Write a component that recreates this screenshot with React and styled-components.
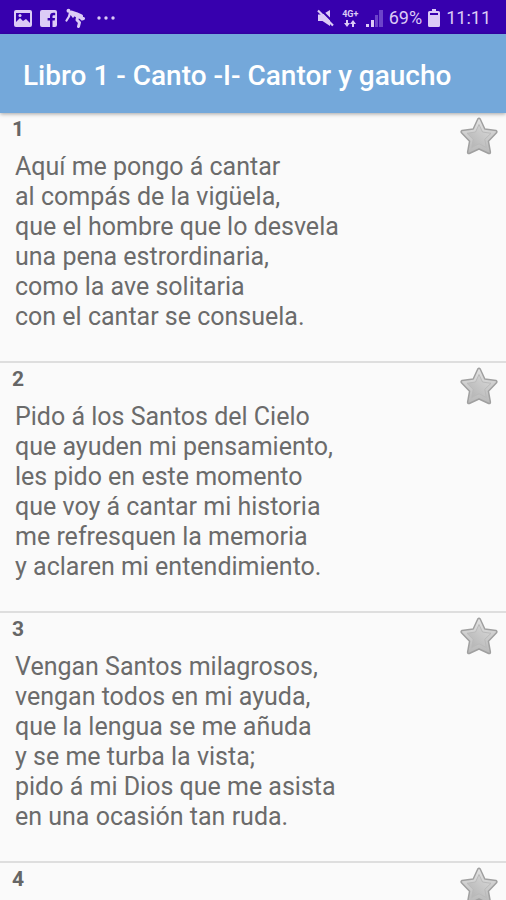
import { useState } from 'react';
import styled, { createGlobalStyle } from 'styled-components';

const GlobalStyle = createGlobalStyle`
  * {
    box-sizing: border-box;
  }

  body {
    background: #fafafa;
    font-family: Roboto, sans-serif;
    margin: 0;
  }
`;

const Screen = styled.div`
  display: flex;
  flex-direction: column;
  height: 100vh;
  overflow: hidden;
`;

const StatusBar = styled.div`
  align-items: center;
  background: #3700ae;
  color: #dccbf6;
  display: flex;
  flex: none;
  font-size: 18px;
  height: 34px;
  justify-content: space-between;
  line-height: 20px;
  padding: 2px 15px 0 14px;
`;

const StatusGroup = styled.div`
  align-items: center;
  display: flex;
  gap: ${(props) => props.$gap}px;

  svg {
    display: block;
  }
`;

const AppBar = styled.header`
  align-items: center;
  background: #74a8da;
  box-shadow: 0 1px 4px rgba(0, 0, 0, 0.35);
  display: flex;
  flex: none;
  height: 79px;
  padding: 5px 24px 0 23px;
  z-index: 1;
`;

const Title = styled.h1`
  color: #fff;
  font-size: 28px;
  font-weight: 500;
  line-height: 32px;
  margin: 0;
  white-space: nowrap;
`;

const VerseList = styled.ol`
  flex: 1;
  list-style: none;
  margin: 0;
  min-height: 0;
  overflow-y: auto;
  padding: 0;
  scrollbar-width: none;
`;

const Verse = styled.li`
  align-items: flex-start;
  border-bottom: 2px solid #dedede;
  display: flex;
  justify-content: space-between;
  min-height: 250px;
  padding: 4px 8px 0 12px;
`;

const VerseNumber = styled.h2`
  color: #666;
  font-size: 21px;
  font-weight: 700;
  line-height: 24px;
  margin: 0;
`;

const VerseText = styled.p`
  color: #6b6b6b;
  font-size: 25px;
  line-height: 30px;
  margin: 11px 0 0;
  padding-left: 3px;
  white-space: pre-line;
`;

const StarButton = styled.button`
  background: none;
  border: 0;
  cursor: pointer;
  flex: none;
  padding: 0;

  svg {
    display: block;
  }
`;

const NetworkType = styled.div`
  align-items: center;
  display: flex;
  flex-direction: column;
  font-size: 9px;
  font-weight: 700;
  line-height: 11px;
  width: 19px;
`;

const verses = [
  {
    number: 1,
    lines: [
      'Aquí me pongo á cantar',
      'al compás de la vigüela,',
      'que el hombre que lo desvela',
      'una pena estrordinaria,',
      'como la ave solitaria',
      'con el cantar se consuela.',
    ],
  },
  {
    number: 2,
    lines: [
      'Pido á los Santos del Cielo',
      'que ayuden mi pensamiento,',
      'les pido en este momento',
      'que voy á cantar mi historia',
      'me refresquen la memoria',
      'y aclaren mi entendimiento.',
    ],
  },
  {
    number: 3,
    lines: [
      'Vengan Santos milagrosos,',
      'vengan todos en mi ayuda,',
      'que la lengua se me añuda',
      'y se me turba la vista;',
      'pido á mi Dios que me asista',
      'en una ocasión tan ruda.',
    ],
  },
  { number: 4, lines: [] },
];

const PictureIcon = () => (
  <svg width="18" height="17" viewBox="0 0 18 17">
    <path
      fill="currentColor"
      fillRule="evenodd"
      d="M2 0h14a2 2 0 0 1 2 2v13a2 2 0 0 1-2 2H2a2 2 0 0 1-2-2V2a2 2 0 0 1 2-2zm0 3v9l4-4 3 3 3-2 4 4V3z"
    />
    <circle cx="6" cy="5.5" r="1.5" fill="currentColor" />
  </svg>
);

const FacebookIcon = () => (
  <svg width="17" height="17" viewBox="0 0 17 17">
    <path
      fill="currentColor"
      d="M2 0h13a2 2 0 0 1 2 2v13a2 2 0 0 1-2 2h-2.500v-6.500h2.200l.4-2.500h-2.600V6.500c0-.9.400-1.300 1.300-1.300h1.400V2.900c-3.600-.6-5.200.6-5.200 3.200V8H7.600v2.500H10V17H2a2 2 0 0 1-2-2V2a2 2 0 0 1 2-2z"
    />
  </svg>
);

const GymnastIcon = () => (
  <svg width="20" height="20" viewBox="0 0 20 20">
    <g
      fill="none"
      stroke="currentColor"
      strokeLinecap="round"
      strokeLinejoin="round"
    >
      <path strokeWidth="5" d="M6.500 5l4.500 1.500 4.500 2" />
      <path strokeWidth="3" d="M12.500 9l-.5 3 2.500 2.500-1 4M15.500 9l1.500 2 1.500-.5" />
      <path strokeWidth="2.200" d="M5 4.500L4 8.500 1.500 12.500M6 5l2 3.500" />
    </g>
    <circle cx="3.500" cy="2.800" r="2" fill="currentColor" />
  </svg>
);

const MoreIcon = () => (
  <svg width="24" height="4" viewBox="0 0 24 4">
    <circle cx="6" cy="2" r="1.700" fill="currentColor" />
    <circle cx="13" cy="2" r="1.700" fill="currentColor" />
    <circle cx="20" cy="2" r="1.700" fill="currentColor" />
  </svg>
);

const MuteIcon = () => (
  <svg width="18" height="18" viewBox="0 0 18 18">
    <path fill="currentColor" d="M1 5.500h4.500L13 1v16l-7.500-5H1z" />
    <path stroke="#3700ae" strokeWidth="2" d="M3 0l14 14" />
    <path stroke="currentColor" strokeWidth="2.200" d="M1 1.500l15 15" />
  </svg>
);

const ArrowsIcon = () => (
  <svg width="12" height="7" viewBox="0 0 12 7">
    <path
      fill="currentColor"
      d="M2 0h2v3h2L3 7 0 3h2zM8 7h2V4h2L9 0 6 4h2z"
    />
  </svg>
);

const SignalIcon = () => (
  <svg width="17" height="17" viewBox="0 0 17 17">
    <path fill="currentColor" d="M0 14h3v3H0zM5 10h3v7H5z" />
    <path fill="#6c43ca" d="M9 5h3v12H9zM13 0h4v17h-4z" />
  </svg>
);

const BatteryIcon = () => (
  <svg width="12" height="18" viewBox="0 0 12 18">
    <path
      fill="currentColor"
      fillRule="evenodd"
      d="M4 0h4v2h2.500A1.500 1.500 0 0 1 12 3.500v13a1.500 1.500 0 0 1-1.500 1.500h-9A1.500 1.500 0 0 1 0 16.500v-13A1.500 1.500 0 0 1 1.500 2H4zM2 4v2h8V4z"
    />
  </svg>
);

const StarIcon = ({ active }) => (
  <svg width="38" height="38" viewBox="0 0 38 38">
    <defs>
      <linearGradient id="starRim" x1="0" y1="0" x2="0" y2="1">
        <stop offset="0" stopColor="#e2e2e2" />
        <stop offset="1" stopColor="#b8b8b8" />
      </linearGradient>
      <linearGradient id="starFill" x1="1" y1="0" x2="0" y2="1">
        <stop offset="0" stopColor={active ? '#ffe58a' : '#dadada'} />
        <stop offset="1" stopColor={active ? '#f0b400' : '#b2b2b2'} />
      </linearGradient>
    </defs>
    <path
      fill="url(#starRim)"
      stroke="#a0a0a0"
      strokeLinejoin="round"
      strokeWidth="1.500"
      d="M17.800 2q1.200-1.500 2.400 0l4.600 10L36 13.500q1.500.8.500 2.300l-8.100 8.400 2 11q0 1.800-1.700 1.300L19 32l-9.700 4.500q-1.700.5-1.700-1.300l2-11-8.100-8.400q-1-1.500.5-2.300l11.200-1.500z"
    />
    <path
      fill="url(#starFill)"
      stroke="#bababa"
      strokeLinejoin="round"
      d="M19 7.500l3.500 7.500 8.500 1.300-6.200 6 1.500 8.200-7.300-3.700-7.300 3.700 1.500-8.200-6.200-6 8.500-1.300z"
    />
  </svg>
);

const App = () => {
  const [favorites, setFavorites] = useState([]);

  const toggleFavorite = (number) => {
    setFavorites(
      favorites.includes(number)
        ? favorites.filter((item) => item !== number)
        : [...favorites, number]
    );
  };

  return (
    <Screen>
      <GlobalStyle />
      <StatusBar>
        <StatusGroup $gap={8}>
          <PictureIcon />
          <FacebookIcon />
          <GymnastIcon />
          <MoreIcon />
        </StatusGroup>
        <StatusGroup $gap={6}>
          <MuteIcon />
          <NetworkType>
            4G+
            <ArrowsIcon />
          </NetworkType>
          <SignalIcon />
          <span>69%</span>
          <BatteryIcon />
          <span>11:11</span>
        </StatusGroup>
      </StatusBar>

      <AppBar>
        <Title>Libro 1 - Canto -I- Cantor y gaucho</Title>
      </AppBar>

      <VerseList>
        {verses.map(({ number, lines }) => (
          <Verse key={number}>
            <div>
              <VerseNumber>{number}</VerseNumber>
              <VerseText>{lines.join('\n')}</VerseText>
            </div>
            <StarButton
              type="button"
              aria-label="Favorito"
              aria-pressed={favorites.includes(number)}
              onClick={() => toggleFavorite(number)}
            >
              <StarIcon active={favorites.includes(number)} />
            </StarButton>
          </Verse>
        ))}
      </VerseList>
    </Screen>
  );
};

export default App;
